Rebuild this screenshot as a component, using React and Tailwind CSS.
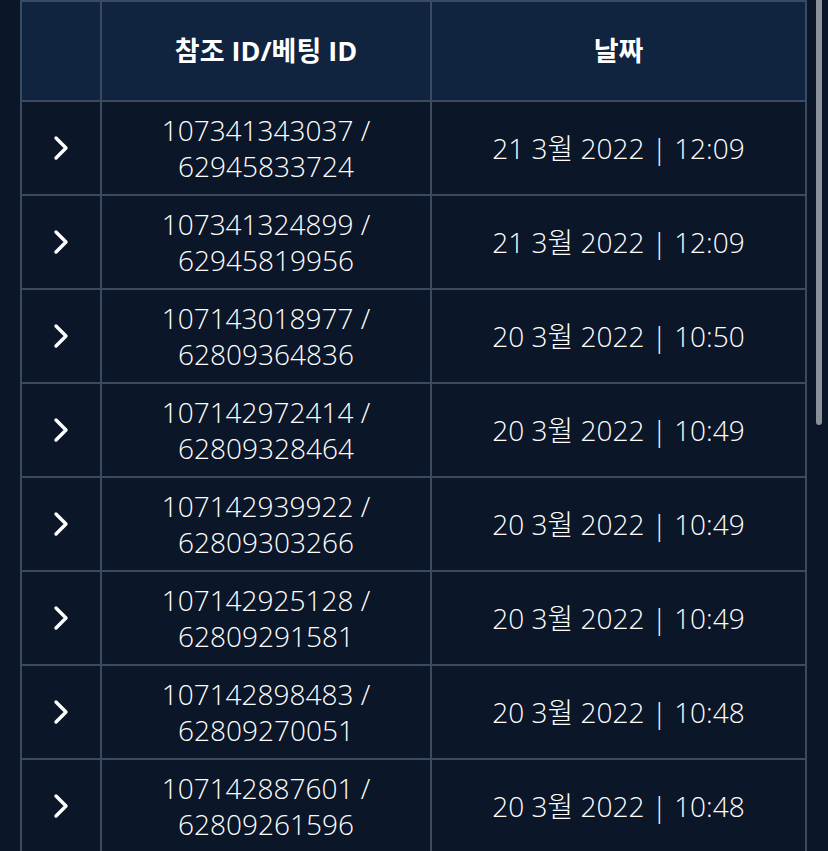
import React from "react";

const bets = [
  { ref: "107341343037", bet: "62945833724", date: "21 3월 2022", time: "12:09" },
  { ref: "107341324899", bet: "62945819956", date: "21 3월 2022", time: "12:09" },
  { ref: "107143018977", bet: "62809364836", date: "20 3월 2022", time: "10:50" },
  { ref: "107142972414", bet: "62809328464", date: "20 3월 2022", time: "10:49" },
  { ref: "107142939922", bet: "62809303266", date: "20 3월 2022", time: "10:49" },
  { ref: "107142925128", bet: "62809291581", date: "20 3월 2022", time: "10:49" },
  { ref: "107142898483", bet: "62809270051", date: "20 3월 2022", time: "10:48" },
  { ref: "107142887601", bet: "62809261596", date: "20 3월 2022", time: "10:48" },
];

function Chevron() {
  return (
    <svg width="18" height="26" viewBox="0 0 18 26" className="mx-auto">
      <polyline
        points="4,3 14,13 4,23"
        fill="none"
        stroke="#ffffff"
        strokeWidth="3.4"
        strokeLinecap="round"
        strokeLinejoin="round"
      />
    </svg>
  );
}

export default function App() {
  return (
    <div
      className="relative w-[828px] h-[851px] overflow-hidden bg-[#0b1628] text-white"
      style={{ fontFamily: '"Open Sans", "Noto Sans CJK KR", sans-serif' }}
    >
      <div className="pl-5 w-[807px]">
        <table className="w-[787px] table-fixed border-collapse">
          <colgroup>
            <col className="w-[80px]" />
            <col className="w-[330px]" />
            <col />
          </colgroup>
          <thead>
            <tr className="h-[100px] bg-[#10233f]">
              <th className="border-2 border-[#3a4a61]"></th>
              <th className="border-2 border-[#3a4a61] text-[27px] font-bold">참조 ID/베팅 ID</th>
              <th className="border-2 border-[#3a4a61] text-[27px] font-bold">날짜</th>
            </tr>
          </thead>
          <tbody>
            {bets.map((b) => (
              <tr key={b.ref} className="h-[94px] bg-[#0b1628]">
                <td className="border-2 border-[#3a4a61] text-center">
                  <Chevron />
                </td>
                <td className="border-2 border-[#3a4a61] text-center text-[28px] font-light leading-[36px]">
                  {b.ref} /<br />
                  {b.bet}
                </td>
                <td className="border-2 border-[#3a4a61] text-center text-[28px] font-light leading-[34px]">
                  {b.date} | {b.time}
                </td>
              </tr>
            ))}
          </tbody>
        </table>
      </div>
      <div className="absolute left-[816px] top-0 w-[6px] h-[425px] rounded-b-[3px] bg-[#8a909a]" />
    </div>
  );
}
